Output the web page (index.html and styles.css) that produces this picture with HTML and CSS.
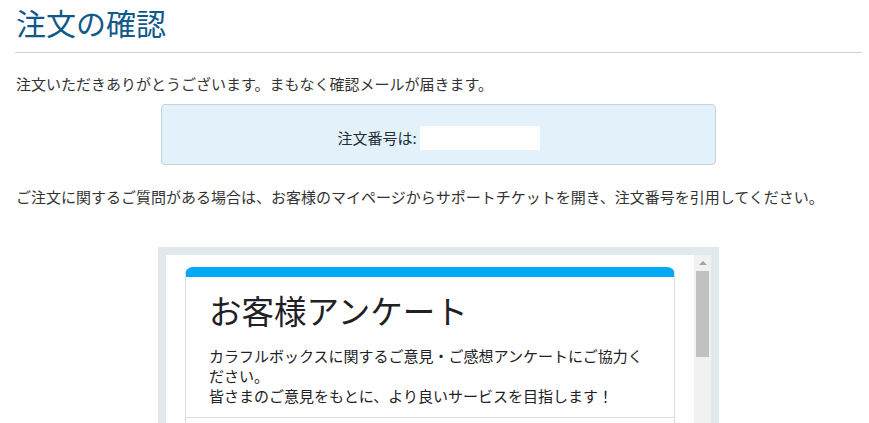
FILE: index.html
```html
<!doctype html>
<html lang="ja">
  <head>
    <title>注文の確認</title>
    <meta charset="utf-8" />
    <link rel="stylesheet" href="styles.css">
  </head>
  <body>
    <div class="page">
      <h1 class="page-title">注文の確認</h1>
      <p class="lead">注文いただきありがとうございます。まもなく確認メールが届きます。</p>
      <div class="order-box">
        <span class="order-label">注文番号は:</span>
        <span class="order-number"></span>
      </div>
      <p class="note">ご注文に関するご質問がある場合は、お客様のマイページからサポートチケットを開き、注文番号を引用してください。</p>

      <div class="survey-frame">
        <div class="survey-view">
          <div class="form-card">
            <div class="form-head">
              <div class="form-title">お客様アンケート</div>
              <div class="form-desc">カラフルボックスに関するご意見・ご感想アンケートにご協力ください。<br>皆さまのご意見をもとに、より良いサービスを目指します！</div>
            </div>
            <div class="form-section"></div>
          </div>
        </div>
        <div class="scrollbar">
          <span class="scroll-up"></span>
          <span class="scroll-thumb"></span>
        </div>
      </div>
    </div>
  </body>
</html>
```

FILE: styles.css
```css
* {
  box-sizing: border-box;
}

body {
  margin: 0;
  background: #ffffff;
  color: #333333;
  font-family: "Noto Sans CJK JP", "Noto Sans", sans-serif;
  font-size: 15px;
  overflow: hidden;
}

.page {
  width: 847px;
  margin-left: 15px;
}

.page-title {
  margin: 0;
  padding: 2px 0 10px 1px;
  height: 53px;
  font-size: 30px;
  line-height: 40px;
  font-weight: normal;
  color: #0f5a8a;
  border-bottom: 1px solid #c9d6de;
}

.lead,
.note {
  margin: 0;
  padding-left: 1px;
  line-height: 21px;
}

.lead {
  margin-top: 20px;
}

.order-box {
  width: 555px;
  height: 61px;
  margin: 10px auto 0;
  padding-top: 21px;
  text-align: center;
  background: #e3f1fa;
  border: 1px solid #c4d3de;
  border-radius: 4px;
  font-size: 0;
}

.order-label {
  display: inline-block;
  vertical-align: top;
  font-size: 15px;
  line-height: 24px;
  color: #222d35;
}

.order-number {
  display: inline-block;
  vertical-align: top;
  width: 120px;
  height: 24px;
  margin-left: 3px;
  background: #fefefe;
}

.note {
  margin-top: 21px;
}

.survey-frame {
  display: flex;
  width: 561px;
  height: 200px;
  margin: 40px auto 0;
  border: 8px solid #e1e9ec;
  border-bottom: none;
  background: #ffffff;
}

.survey-view {
  flex: 1;
  padding: 12px 19px 0;
  color: #202124;
}

.form-card {
  border: 1px solid #dadce0;
  border-top: 10px solid #03a9f4;
  border-radius: 8px 8px 0 0;
  font-size: 15px;
}

.form-head {
  padding: 13px 23px 11px;
}

.form-title {
  font-size: 32.5px;
  line-height: 40px;
}

.form-desc {
  margin-top: 16px;
  line-height: 20px;
}

.form-section {
  height: 40px;
  border-top: 1px solid #dadce0;
}

.scrollbar {
  width: 17px;
  display: flex;
  flex-direction: column;
  align-items: center;
  background: #f1f1f1;
}

.scroll-up {
  width: 0;
  height: 0;
  margin: 6px 0;
  border-left: 4px solid transparent;
  border-right: 4px solid transparent;
  border-bottom: 4px solid #a3a3a3;
}

.scroll-thumb {
  width: 13px;
  height: 86px;
  background: #c1c1c1;
}
```
